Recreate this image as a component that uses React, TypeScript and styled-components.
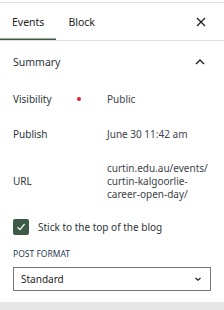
import React from "react";
import styled, { createGlobalStyle } from "styled-components";

const Global = createGlobalStyle`
  html, body {
    margin: 0;
    padding: 0;
    background: #fff;
  }
  body {
    font-family: "Noto Sans", "Open Sans", sans-serif;
    font-size: 10px;
    color: #1e1e1e;
  }
`;

const Panel = styled.div`
  width: 224px;
  height: 308px;
  display: flex;
  flex-direction: column;
  border-top: 1px solid #e0e0e0;
  margin-top: 2px;
  box-sizing: border-box;
  overflow: hidden;
`;

const TabBar = styled.div`
  display: flex;
  align-items: stretch;
  height: 37px;
  border-bottom: 1px solid #e0e0e0;
`;

const Tab = styled.div<{ $active?: boolean }>`
  display: flex;
  align-items: center;
  padding: 0 12px;
  font-size: 10.5px;
  color: #1e1e1e;
  box-shadow: ${(p) => (p.$active ? "inset 0 -1.5px 0 #3c5a40" : "none")};
`;

const Spacer = styled.div`
  flex: 1;
`;

const IconButton = styled.div`
  display: flex;
  align-items: center;
  justify-content: center;
  width: 24px;
  margin-right: 11px;
  color: #1e1e1e;
`;

const SectionHead = styled.div`
  display: flex;
  align-items: center;
  justify-content: space-between;
  height: 42px;
  padding: 0 12px 0 13px;
  font-size: 10.5px;
  color: #2c3338;
`;

const Rows = styled.div`
  display: flex;
  flex-direction: column;
  padding: 0 13px;
`;

const Row = styled.div<{ $h: number }>`
  display: grid;
  grid-template-columns: 64px 30px 1fr;
  align-items: center;
  min-height: ${(p) => p.$h}px;
  font-size: 10px;
`;

const Label = styled.div`
  color: #2c3338;
`;

const Dot = styled.span`
  width: 4px;
  height: 4px;
  border-radius: 50%;
  background: #e0202a;
`;

const Value = styled.div`
  color: #3c434a;
  line-height: 13px;
`;

const CheckRow = styled.label`
  display: flex;
  align-items: center;
  gap: 9px;
  margin-top: 10px;
  font-size: 10px;
  color: #2c3338;
`;

const Box = styled.span`
  width: 16px;
  height: 16px;
  border-radius: 2px;
  background: #3c5a46;
  display: flex;
  align-items: center;
  justify-content: center;
`;

const FieldLabel = styled.div`
  margin-top: 13px;
  font-size: 8.5px;
  line-height: 11px;
  text-transform: uppercase;
  color: #1f3b57;
`;

const Select = styled.div`
  margin-top: 8px;
  height: 24px;
  border: 1px solid #757575;
  box-sizing: border-box;
  display: flex;
  align-items: center;
  justify-content: space-between;
  padding: 0 7px;
  font-size: 10px;
  color: #1e1e1e;
`;

const Footer = styled.div`
  margin-top: auto;
  height: 8px;
  background: #e6e6e6;
`;

export default function App() {
  return (
    <>
      <Global />
      <Panel>
        <TabBar>
          <Tab $active>Events</Tab>
          <Tab>Block</Tab>
          <Spacer />
          <IconButton>
            <svg width="10" height="10" viewBox="0 0 10 10">
              <path d="M1 1L9 9M9 1L1 9" stroke="#1e1e1e" strokeWidth="1.2" />
            </svg>
          </IconButton>
        </TabBar>
        <SectionHead>
          <span>Summary</span>
          <svg width="24" height="10" viewBox="0 0 24 10">
            <path d="M8 7L12 3L16 7" stroke="#1e1e1e" strokeWidth="1.3" fill="none" />
          </svg>
        </SectionHead>
        <Rows>
          <Row $h={32}>
            <Label>Visibility</Label>
            <Dot />
            <Value>Public</Value>
          </Row>
          <Row $h={38}>
            <Label>Publish</Label>
            <span />
            <Value>June 30 11:42 am</Value>
          </Row>
          <Row $h={56}>
            <Label>URL</Label>
            <span />
            <Value>
              curtin.edu.au/events/
              <br />
              curtin-kalgoorlie-
              <br />
              career-open-day/
            </Value>
          </Row>
          <CheckRow>
            <Box>
              <svg width="12" height="12" viewBox="0 0 12 12">
                <path d="M2.5 6.3L5 8.7L9.6 3" stroke="#fff" strokeWidth="1.2" fill="none" />
              </svg>
            </Box>
            Stick to the top of the blog
          </CheckRow>
          <FieldLabel>Post Format</FieldLabel>
          <Select>
            Standard
            <svg width="10" height="10" viewBox="0 0 10 10">
              <path d="M2.5 4L5 6.3L7.5 4" stroke="#1e1e1e" strokeWidth="1.2" fill="none" />
            </svg>
          </Select>
        </Rows>
        <Footer />
      </Panel>
    </>
  );
}
